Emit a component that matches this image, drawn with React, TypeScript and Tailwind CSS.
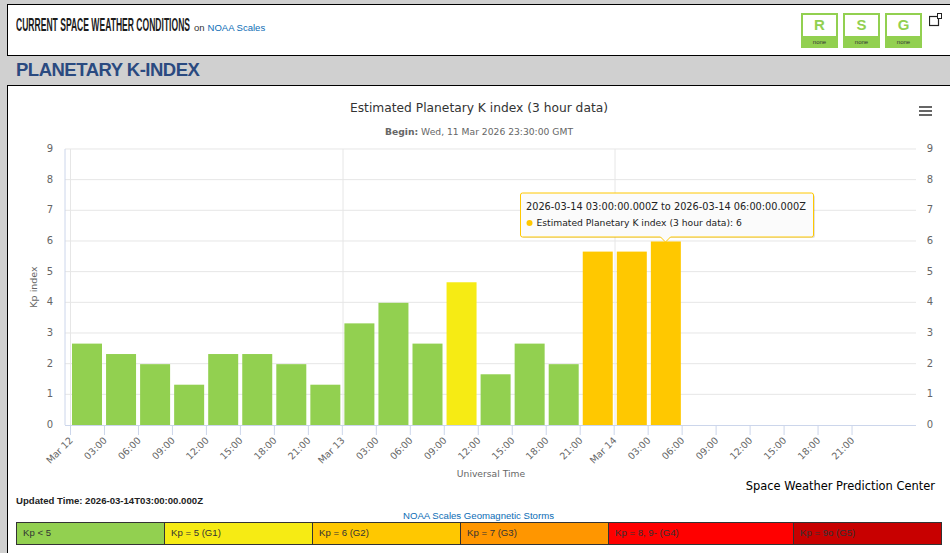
const GREEN = "#92d050";
const YELLOW = "#f6eb14";
const AMBER = "#ffc800";

const bars = [2.67, 2.33, 2, 1.33, 2.33, 2.33, 2, 1.33, 3.33, 4, 2.67, 4.67, 1.67, 2.67, 2, 5.67, 5.67, 6];
const ticks = ["Mar 12", "03:00", "06:00", "09:00", "12:00", "15:00", "18:00", "21:00", "Mar 13", "03:00", "06:00", "09:00", "12:00", "15:00", "18:00", "21:00", "Mar 14", "03:00", "06:00", "09:00", "12:00", "15:00", "18:00", "21:00"];
const levels = [0, 1, 2, 3, 4, 5, 6, 7, 8, 9];

const legend = [
  { label: "Kp < 5", cls: "w-[147px] bg-[#92d050]" },
  { label: "Kp = 5 (G1)", cls: "w-[148px] bg-[#f6eb14]" },
  { label: "Kp = 6 (G2)", cls: "w-[148px] bg-[#ffc800]" },
  { label: "Kp = 7 (G3)", cls: "w-[148px] bg-[#ff9600]" },
  { label: "Kp = 8, 9- (G4)", cls: "w-[185px] bg-[#ff0000]" },
  { label: "Kp = 9o (G5)", cls: "flex-1 bg-[#c80000]" },
];

function barColor(v: number) {
  if (v >= 5.5) return AMBER;
  if (v >= 4.5) return YELLOW;
  return GREEN;
}

function yOf(v: number) {
  return 425 - v * 30.67;
}

function Badge({ letter }: { letter: string }) {
  return (
    <div className="flex h-[35px] w-[37px] flex-col bg-[#92d050] px-[2px] pt-[2px]">
      <div className="flex h-[21px] items-center justify-center bg-white text-[15px] font-bold text-[#92d050]">{letter}</div>
      <div className="flex flex-1 items-center justify-center text-[6px] text-[#333]">none</div>
    </div>
  );
}

function Chart() {
  const font = "'DejaVu Sans', Verdana, sans-serif";
  return (
    <svg viewBox="8 86 942 408" className="block h-[408px] w-[942px]" fontFamily={font}>
      <text x="479" y="112" textAnchor="middle" fontSize="12.25" fill="#333">Estimated Planetary K index (3 hour data)</text>
      <text x="479" y="135" textAnchor="middle" fontSize="9.2" fill="#666">
        <tspan fontWeight="bold">Begin:</tspan> Wed, 11 Mar 2026 23:30:00 GMT
      </text>
      <g fill="#666">
        <rect x="919" y="106" width="13" height="2" />
        <rect x="919" y="110" width="13" height="2" />
        <rect x="919" y="114" width="13" height="2" />
      </g>

      {levels.slice(1).map((v) => (
        <line key={v} x1="65" x2="916" y1={yOf(v)} y2={yOf(v)} stroke="#e6e6e6" />
      ))}
      {[70.5, 343, 615].map((x) => (
        <line key={x} x1={x} x2={x} y1="149" y2="425" stroke="#e6e6e6" />
      ))}
      <line x1="65" x2="65" y1="149" y2="425" stroke="#ccd6eb" />
      <line x1="65" x2="916" y1="425.5" y2="425.5" stroke="#ccd6eb" />

      {levels.map((v) => (
        <g key={v} fontSize="10" fill="#666" textAnchor="middle">
          <text x="50" y={yOf(v) + 3}>{v}</text>
          <text x="930" y={yOf(v) + 3}>{v}</text>
        </g>
      ))}
      <text transform="translate(37 287) rotate(-90)" textAnchor="middle" fontSize="9.5" fill="#666">Kp index</text>

      {bars.map((v, i) => (
        <rect key={i} x={72 + i * 34.05} y={yOf(v) + 0.5} width="30" height={424.5 - yOf(v)} fill={barColor(v)} />
      ))}

      {ticks.map((t, i) => {
        const x = 70.5 + i * 33.98;
        return (
          <g key={i}>
            <line x1={x} x2={x} y1="425" y2="435" stroke="#ccd6eb" />
            <text transform={`translate(${x + 3} 441) rotate(-45)`} textAnchor="end" fontSize="9.5" fill="#666">{t}</text>
          </g>
        );
      })}
      <text x="491" y="477" textAnchor="middle" fontSize="9.2" fill="#666">Universal Time</text>
      <text x="935" y="490" textAnchor="end" fontSize="11.45" fill="#000">Space Weather Prediction Center</text>

      <g>
        <rect x="522" y="195" width="293" height="43" rx="2" fill="#000" opacity="0.12" />
        <path d="M520.5 195a2 2 0 0 1 2-2h289a2 2 0 0 1 2 2v40a2 2 0 0 1-2 2h-141l-5 5-5-5h-138a2 2 0 0 1-2-2z" fill="#fbfbfb" stroke={AMBER} />
        <text x="526" y="210" fontSize="9.75" fill="#222">2026-03-14 03:00:00.000Z to 2026-03-14 06:00:00.000Z</text>
        <circle cx="529.5" cy="223" r="3" fill={AMBER} />
        <text x="536.5" y="226" fontSize="9.2" fill="#222">Estimated Planetary K index (3 hour data): 6</text>
      </g>
    </svg>
  );
}

export default function App() {
  return (
    <div className="h-[553px] w-[950px] overflow-hidden bg-[#d0d0d0] pl-[7px] pt-[4px] font-['Liberation_Sans',Arial,sans-serif]">
      <header className="flex h-[52px] w-[960px] border border-black bg-white pl-[8px]">
        <div className="flex h-[40px] items-center">
          <h1 className="w-[176px] origin-left scale-x-[0.475] whitespace-nowrap text-[18px] font-bold text-[#1c1c1c]">
            CURRENT SPACE WEATHER CONDITIONS
          </h1>
          <span className="ml-[2px] mt-[6px] text-[9.5px] text-[#333]">on</span>
          <a className="ml-[3px] mt-[6px] text-[9.5px] text-[#0b6cb5]">NOAA Scales</a>
        </div>
        <div className="ml-auto mr-[23px] mt-[8px] flex items-start gap-[5px]">
          <Badge letter="R" />
          <Badge letter="S" />
          <Badge letter="G" />
          <svg viewBox="0 0 14 14" className="ml-[2px] h-[14px] w-[14px]" fill="none" stroke="#222">
            <rect x="0.5" y="3.5" width="9" height="9" strokeWidth="1.2" />
            <rect x="8.5" y="0.5" width="4" height="5" fill="#fff" strokeWidth="1" />
          </svg>
        </div>
      </header>

      <h2 className="ml-[9px] h-[29px] pt-[3px] text-[18.5px] font-bold leading-[21px] tracking-[-0.5px] text-[#2a4a80]">PLANETARY K-INDEX</h2>

      <main className="h-[480px] w-[960px] border border-black bg-white">
        <Chart />
        <p className="ml-[8px] mt-[1px] text-[9.6px] font-bold leading-[12px] text-[#222]">Updated Time: 2026-03-14T03:00:00.000Z</p>
        <p className="mt-[2px] w-[941px] text-center text-[9.6px] leading-[13px] text-[#0b6cb5]">NOAA Scales Geomagnetic Storms</p>
        <div className="ml-[8px] flex h-[23px] w-[926px] border border-[#333]">
          {legend.map((l, i) => (
            <div key={l.label} className={`${l.cls} ${i > 0 ? "border-l border-[#333]" : ""} pl-[6px] text-[9.6px] leading-[20px] text-[#333]`}>
              {l.label}
            </div>
          ))}
        </div>
      </main>
    </div>
  );
}
